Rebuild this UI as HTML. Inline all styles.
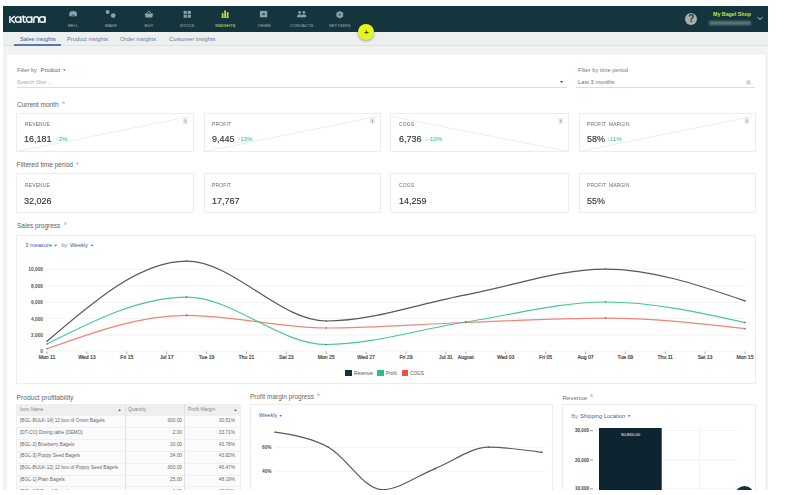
<!DOCTYPE html>
<html><head><meta charset="utf-8">
<style>
html,body{margin:0;padding:0;}
body{width:808px;height:495px;overflow:hidden;background:#fff;position:relative;font-family:"Liberation Sans",sans-serif;color:#444;}
.a{position:absolute;}
.t{position:absolute;white-space:nowrap;line-height:1;}
#app{left:3px;top:6px;width:765px;height:484px;background:#f3f2f2;overflow:hidden;}
#hdr{left:3px;top:6px;width:765px;height:26px;background:#14353d;}
#tabs{left:3px;top:32px;width:765px;height:13.2px;background:#eef0ef;border-bottom:1px solid #e2e0e0;}
#main{left:7px;top:55.2px;width:758px;height:435px;background:#fff;}
.lb2{position:absolute;width:40px;margin-left:-20px;top:23.5px;text-align:center;font-size:4.2px;color:#889ea3;-webkit-text-stroke:0.1px #889ea3;line-height:1;white-space:nowrap;letter-spacing:0.05px;}
.card{position:absolute;background:#fff;border:1px solid #ededed;box-sizing:border-box;border-radius:1px;box-shadow:0 0 1.5px rgba(0,0,0,0.04);}
.klabel{position:absolute;font-size:5.6px;color:#6a6a6a;letter-spacing:0.2px;word-spacing:1.5px;line-height:1;white-space:nowrap;transform:scaleX(0.88);transform-origin:0 0;}
.kval{position:absolute;font-size:9.7px;color:#363636;-webkit-text-stroke:0.15px #363636;line-height:1;white-space:nowrap;transform:scaleX(0.93);transform-origin:0 0;}
.kchg{position:absolute;font-size:6.1px;color:#2cba85;line-height:1;white-space:nowrap;}
.sec{position:absolute;font-size:6.5px;color:#606060;line-height:1;white-space:nowrap;}
.sec i{display:inline-block;width:3px;height:3px;background:#cfcfcf;border-radius:50%;vertical-align:top;position:relative;top:-0.7px;margin-left:3.3px;}
.info{position:absolute;width:5px;height:5px;border-radius:50%;background:#c8c8c8;}
.blue{color:#3a62b0;}
.tbl{position:absolute;font-size:4.8px;color:#666;line-height:1;white-space:nowrap;}
</style></head><body>
<div id="root" style="position:absolute;left:0;top:0;width:808px;height:495px;overflow:hidden;">
<div id="app" class="a"></div>
<div id="hdr" class="a"></div>
<svg class="a" style="left:0;top:0" width="808" height="40">
<g stroke="#eef3f4" stroke-width="1.45" fill="none" stroke-linecap="butt">
<path d="M9.9,16V22.9"/><path d="M14.8,16.1L10.5,19.5L14.9,22.9"/>
<circle cx="18.1" cy="19.5" r="2.65"/><path d="M20.8,16.2V22.9"/>
<path d="M23.4,15.6V21.2Q23.4,22.3 25.8,22.3"/><path d="M21.9,17H25.9"/>
<circle cx="29.1" cy="19.5" r="2.65"/><path d="M31.8,16.2V22.9"/>
<path d="M33.8,22.9V19.1A2.4,2.4 0 0 1 38.6,19.1V22.9"/>
<circle cx="42.2" cy="19.5" r="2.75"/><path d="M45,16.2V22.9"/>
</g>
<g fill="#8ba1a6">
<!-- sell: shop -->
<path d="M69.3,16.3V13.4Q69.3,10.9 73.1,10.9Q76.9,10.9 76.9,13.4V16.3Z"/>
<!-- make: gears -->
<circle cx="107.6" cy="12" r="2"/><circle cx="113.2" cy="15.6" r="2.4"/>
<!-- buy: basket -->
<path d="M144.6,13.6H153.2L152.2,17.6H145.6Z"/><path d="M146.5,13.6L148.9,10.9L151.3,13.6" stroke="#8ba1a6" stroke-width="0.9" fill="none"/>
<!-- stock: grid -->
<rect x="183.6" y="10.9" width="3.2" height="3"/><rect x="187.7" y="10.9" width="3.2" height="3"/>
<rect x="183.6" y="14.7" width="3.2" height="3"/><rect x="187.7" y="14.7" width="3.2" height="3"/>
<!-- items: box -->
<rect x="259.9" y="10.9" width="7.3" height="6.4"/>
<!-- contacts -->
<circle cx="299.6" cy="12.3" r="1.4"/><circle cx="303.8" cy="12.3" r="1.4"/>
<path d="M297,17.3Q297,14.3 299.6,14.3Q302.2,14.3 302.2,17.3Z"/><path d="M301.2,17.3Q301.2,14.3 303.8,14.3Q306.4,14.3 306.4,17.3Z"/>
<!-- settings gear -->
<path d="M339.8,10.9L343.2,12.8V16.6L339.8,18.5L336.4,16.6V12.8Z"/>
</g>
<rect x="262.3" y="13.1" width="2.6" height="2" fill="#3d5a62"/>
<circle cx="339.8" cy="14.7" r="1.1" fill="#3d5a62"/>
<rect x="71.6" y="14.6" width="3" height="1.7" fill="#4a666d"/>

<g fill="#c9e03a">
<rect x="221.8" y="13.2" width="1.7" height="4.1"/><rect x="224.3" y="10.4" width="1.7" height="6.9"/><rect x="226.8" y="12.2" width="1.7" height="5.1"/>
<rect x="221.5" y="17" width="7.3" height="0.8"/>
</g>
</svg>
<div class="lb2" style="left:73px;">SELL</div>
<div class="lb2" style="left:111px;">MAKE</div>
<div class="lb2" style="left:149px;">BUY</div>
<div class="lb2" style="left:187.3px;">STOCK</div>
<div class="lb2" style="left:225.3px;color:#c9e03a;">INSIGHTS</div>
<div class="lb2" style="left:264px;">ITEMS</div>
<div class="lb2" style="left:301.8px;">CONTACTS</div>
<div class="lb2" style="left:339.6px;">SETTINGS</div>

<!-- right header -->
<div class="a" style="left:684.8px;top:12.8px;width:12px;height:12px;border-radius:50%;background:#a7abac;"></div>
<div class="t" style="left:688.2px;top:14.3px;font-size:10px;font-weight:bold;color:#1e3a42;">?</div>
<div class="a" style="left:702px;top:10px;width:1px;height:17px;background:#1c3c45;"></div>
<div class="t" style="left:713px;top:12.2px;font-size:5.3px;font-weight:bold;color:#cde43a;">My Bagel Shop</div>
<div class="a" style="left:708.5px;top:21.1px;width:42.5px;height:3.6px;background:#5f777c;border-radius:1px;filter:blur(1px);"></div>
<svg class="a" style="left:755px;top:15px" width="10" height="8"><path d="M2.6,2.2L5,4.6L7.4,2.2" stroke="#d8e0e2" stroke-width="1" fill="none"/></svg>

<!-- tabs -->
<div id="tabs" class="a"></div>
<div class="t" style="left:20px;top:36.7px;font-size:5.8px;color:#3a5a8a;">Sales insights</div>
<div class="a" style="left:13.6px;top:44.3px;width:47px;height:1.3px;background:#5479b8;"></div>
<div class="t" style="left:67px;top:36.7px;font-size:5.8px;color:#6a7894;">Product insights</div>
<div class="t" style="left:120px;top:36.7px;font-size:5.8px;color:#6a7894;">Order insights</div>
<div class="t" style="left:169px;top:36.7px;font-size:5.8px;color:#6a7894;">Customer insights</div>

<!-- fab -->
<div class="a" style="left:358.4px;top:24.2px;width:16px;height:16px;border-radius:50%;background:#e4f71c;box-shadow:0 1px 3px rgba(0,0,0,0.35);"></div>
<div class="t" style="left:364px;top:28.6px;font-size:8px;font-weight:bold;color:#3a4a20;">+</div>

<div id="main" class="a"></div>

<!-- filters -->
<div class="t" style="left:17px;top:67.7px;font-size:5.6px;color:#777;">Filter by</div>
<div class="t" style="left:40.6px;top:67.7px;font-size:5.7px;color:#3a62b0;">Product</div>
<svg class="a" style="left:62px;top:68px" width="6" height="5"><path d="M0.9,1.4H3.9L2.4,3.1Z" fill="#3a62b0"/></svg>
<div class="t" style="left:17px;top:79.9px;font-size:5.5px;color:#aaa;">Search filter ...</div>
<div class="a" style="left:17px;top:86.7px;width:550px;height:0.8px;background:#ddd;"></div>
<svg class="a" style="left:559px;top:80px" width="6" height="5"><path d="M0.9,1H4.3L2.6,2.9Z" fill="#555"/></svg>
<div class="t" style="left:578px;top:68px;font-size:5.7px;color:#777;">Filter by time period</div>
<div class="t" style="left:578px;top:79.6px;font-size:5.8px;color:#6e6e6e;">Last 3 months</div>
<div class="a" style="left:746px;top:80px;width:5px;height:5px;border-radius:50%;background:#d6d6d6;"></div>
<div class="a" style="left:576px;top:87px;width:179px;height:1px;background:#ddd;"></div>

<!-- current month -->
<div class="sec" style="left:17px;top:101.6px;">Current month<i></i></div>
<div class="card" style="left:16.0px;top:112.6px;width:178.0px;height:39.8px;"></div>
<div class="card" style="left:203.5px;top:112.6px;width:177.7px;height:39.8px;"></div>
<div class="card" style="left:390.4px;top:112.6px;width:179.0px;height:39.8px;"></div>
<div class="card" style="left:578.6px;top:112.6px;width:177.0px;height:39.8px;"></div>
<svg class="a" style="left:0;top:0" width="808" height="495">
<path d="M17,151.5 L190,116.5" stroke="#ebebeb" stroke-width="0.9" fill="none"/>
<path d="M204.5,151.5 L377,116.5" stroke="#ebebeb" stroke-width="0.9" fill="none"/>
<path d="M391.4,116.5 L568.4,151.5" stroke="#ebebeb" stroke-width="0.9" fill="none"/>
<path d="M579.6,151.5 L752,116.5" stroke="#ebebeb" stroke-width="0.9" fill="none"/>
<rect x="183.0" y="118.2" width="4.6" height="5.6" rx="1" fill="#e6e6e6"/><line x1="185.3" x2="185.3" y1="119.6" y2="122.6" stroke="#9a9a9a" stroke-width="0.8"/>
<rect x="370.2" y="118.2" width="4.6" height="5.6" rx="1" fill="#e6e6e6"/><line x1="372.5" x2="372.5" y1="119.6" y2="122.6" stroke="#9a9a9a" stroke-width="0.8"/>
<rect x="558.4" y="118.2" width="4.6" height="5.6" rx="1" fill="#e6e6e6"/><line x1="560.7" x2="560.7" y1="119.6" y2="122.6" stroke="#9a9a9a" stroke-width="0.8"/>
<rect x="744.6" y="118.2" width="4.6" height="5.6" rx="1" fill="#e6e6e6"/><line x1="746.9" x2="746.9" y1="119.6" y2="122.6" stroke="#9a9a9a" stroke-width="0.8"/>
</svg>
<div class="klabel" style="left:24.6px;top:121.7px;">REVENUE</div>
<div class="kval" style="left:24.4px;top:134.4px;">16,181</div>
<div class="klabel" style="left:212.1px;top:121.7px;">PROFIT</div>
<div class="kval" style="left:211.9px;top:134.4px;">9,445</div>
<div class="klabel" style="left:399.0px;top:121.7px;">COGS</div>
<div class="kval" style="left:398.8px;top:134.4px;">6,736</div>
<div class="klabel" style="left:587.2px;top:121.7px;">PROFIT MARGIN</div>
<div class="kval" style="left:587.0px;top:134.4px;">58%</div>
<div class="kchg" style="left:55.6px;top:136.3px;">&#8593;2%</div>
<div class="kchg" style="left:237.2px;top:136.3px;">&#8593;13%</div>
<div class="kchg" style="left:424.8px;top:136.3px;">&#8595;-10%</div>
<div class="kchg" style="left:606.8px;top:136.3px;">&#8593;11%</div>

<!-- filtered time period -->
<div class="sec" style="left:16.6px;top:162.3px;font-size:6.6px;">Filtered time period<i></i></div>
<div class="card" style="left:16.0px;top:173.1px;width:178.0px;height:39.6px;"></div>
<div class="card" style="left:203.5px;top:173.1px;width:177.7px;height:39.6px;"></div>
<div class="card" style="left:390.4px;top:173.1px;width:179.0px;height:39.6px;"></div>
<div class="card" style="left:578.6px;top:173.1px;width:177.0px;height:39.6px;"></div>
<div class="klabel" style="left:24.6px;top:182.6px;">REVENUE</div>
<div class="kval" style="left:24.4px;top:195.6px;">32,026</div>
<div class="klabel" style="left:212.1px;top:182.6px;">PROFIT</div>
<div class="kval" style="left:211.9px;top:195.6px;">17,767</div>
<div class="klabel" style="left:399.0px;top:182.6px;">COGS</div>
<div class="kval" style="left:398.8px;top:195.6px;">14,259</div>
<div class="klabel" style="left:587.2px;top:182.6px;">PROFIT MARGIN</div>
<div class="kval" style="left:587.0px;top:195.6px;">55%</div>

<!-- sales progress -->
<div class="sec" style="left:17px;top:223px;">Sales progress<i></i></div>
<div class="card" style="left:16.3px;top:234.6px;width:739.6px;height:149.4px;"></div>
<svg class="a" style="left:0;top:0" width="808" height="495">
<line x1="47" x2="745" y1="269.1" y2="269.1" stroke="#efefef" stroke-width="0.8"/>
<line x1="47" x2="745" y1="285.7" y2="285.7" stroke="#efefef" stroke-width="0.8"/>
<line x1="47" x2="745" y1="302.3" y2="302.3" stroke="#efefef" stroke-width="0.8"/>
<line x1="47" x2="745" y1="318.6" y2="318.6" stroke="#efefef" stroke-width="0.8"/>
<line x1="47" x2="745" y1="334.9" y2="334.9" stroke="#efefef" stroke-width="0.8"/>
<line x1="47" x2="745" y1="351.2" y2="351.2" stroke="#f3f3f3" stroke-width="0.8"/>
<line x1="47.0" x2="47.0" y1="351.6" y2="354" stroke="#777" stroke-width="0.6"/>
<line x1="86.9" x2="86.9" y1="351.6" y2="354" stroke="#777" stroke-width="0.6"/>
<line x1="126.8" x2="126.8" y1="351.6" y2="354" stroke="#777" stroke-width="0.6"/>
<line x1="166.7" x2="166.7" y1="351.6" y2="354" stroke="#777" stroke-width="0.6"/>
<line x1="206.5" x2="206.5" y1="351.6" y2="354" stroke="#777" stroke-width="0.6"/>
<line x1="246.4" x2="246.4" y1="351.6" y2="354" stroke="#777" stroke-width="0.6"/>
<line x1="286.3" x2="286.3" y1="351.6" y2="354" stroke="#777" stroke-width="0.6"/>
<line x1="326.2" x2="326.2" y1="351.6" y2="354" stroke="#777" stroke-width="0.6"/>
<line x1="366.1" x2="366.1" y1="351.6" y2="354" stroke="#777" stroke-width="0.6"/>
<line x1="406.0" x2="406.0" y1="351.6" y2="354" stroke="#777" stroke-width="0.6"/>
<line x1="445.9" x2="445.9" y1="351.6" y2="354" stroke="#777" stroke-width="0.6"/>
<line x1="465.8" x2="465.8" y1="351.6" y2="354" stroke="#777" stroke-width="0.6"/>
<line x1="505.7" x2="505.7" y1="351.6" y2="354" stroke="#777" stroke-width="0.6"/>
<line x1="545.6" x2="545.6" y1="351.6" y2="354" stroke="#777" stroke-width="0.6"/>
<line x1="585.5" x2="585.5" y1="351.6" y2="354" stroke="#777" stroke-width="0.6"/>
<line x1="625.3" x2="625.3" y1="351.6" y2="354" stroke="#777" stroke-width="0.6"/>
<line x1="665.2" x2="665.2" y1="351.6" y2="354" stroke="#777" stroke-width="0.6"/>
<line x1="705.1" x2="705.1" y1="351.6" y2="354" stroke="#777" stroke-width="0.6"/>
<line x1="745.0" x2="745.0" y1="351.6" y2="354" stroke="#777" stroke-width="0.6"/>
<path d="M47.00,348.80C93.53,332.10 140.07,315.40 186.60,315.40C233.13,315.40 279.67,328.00 326.20,328.00C372.73,328.00 419.27,324.15 465.80,322.50C512.33,320.85 558.87,318.10 605.40,318.10C651.93,318.10 698.47,323.40 745.00,328.70" stroke="#f28474" stroke-width="1.2" fill="none"/>
<circle cx="47.0" cy="348.8" r="0.8" fill="#666"/>
<circle cx="186.6" cy="315.4" r="0.8" fill="#666"/>
<circle cx="326.2" cy="328.0" r="0.8" fill="#666"/>
<circle cx="465.8" cy="322.5" r="0.8" fill="#666"/>
<circle cx="605.4" cy="318.1" r="0.8" fill="#666"/>
<circle cx="745.0" cy="328.7" r="0.8" fill="#666"/>
<path d="M47.00,344.00C93.53,320.55 140.07,297.10 186.60,297.10C233.13,297.10 279.67,344.50 326.20,344.50C372.73,344.50 419.27,329.08 465.80,322.00C512.33,314.92 558.87,302.00 605.40,302.00C651.93,302.00 698.47,312.30 745.00,322.60" stroke="#46c79d" stroke-width="1.2" fill="none"/>
<circle cx="47.0" cy="344.0" r="0.8" fill="#666"/>
<circle cx="186.6" cy="297.1" r="0.8" fill="#666"/>
<circle cx="326.2" cy="344.5" r="0.8" fill="#666"/>
<circle cx="465.8" cy="322.0" r="0.8" fill="#666"/>
<circle cx="605.4" cy="302.0" r="0.8" fill="#666"/>
<circle cx="745.0" cy="322.6" r="0.8" fill="#666"/>
<path d="M47.00,341.30C93.53,301.25 140.07,261.20 186.60,261.20C233.13,261.20 279.67,321.00 326.20,321.00C372.73,321.00 419.27,303.45 465.80,294.80C512.33,286.15 558.87,269.10 605.40,269.10C651.93,269.10 698.47,285.00 745.00,300.90" stroke="#585858" stroke-width="1.2" fill="none"/>
<circle cx="47.0" cy="341.3" r="0.8" fill="#666"/>
<circle cx="186.6" cy="261.0" r="0.8" fill="#666"/>
<circle cx="326.2" cy="321" r="0.8" fill="#666"/>
<circle cx="465.8" cy="294.8" r="0.8" fill="#666"/>
<circle cx="605.4" cy="269.1" r="0.8" fill="#666"/>
<circle cx="745.0" cy="300.9" r="0.8" fill="#666"/>
</svg>
<div class="t" style="right:765px;top:268.0px;font-size:4.8px;color:#555;font-weight:bold;">10,000</div>
<div class="t" style="right:765px;top:284.6px;font-size:4.8px;color:#555;font-weight:bold;">8,000</div>
<div class="t" style="right:765px;top:301.2px;font-size:4.8px;color:#555;font-weight:bold;">6,000</div>
<div class="t" style="right:765px;top:317.5px;font-size:4.8px;color:#555;font-weight:bold;">4,000</div>
<div class="t" style="right:765px;top:333.8px;font-size:4.8px;color:#555;font-weight:bold;">2,000</div>
<div class="t" style="right:765px;top:350.1px;font-size:4.8px;color:#555;font-weight:bold;">0</div>
<div class="t" style="left:47.0px;width:30px;margin-left:-15px;text-align:center;top:355.4px;font-size:5.1px;color:#444;-webkit-text-stroke:0.2px #444;">Mon 11</div>
<div class="t" style="left:86.9px;width:30px;margin-left:-15px;text-align:center;top:355.4px;font-size:5.1px;color:#444;-webkit-text-stroke:0.2px #444;">Wed 13</div>
<div class="t" style="left:126.8px;width:30px;margin-left:-15px;text-align:center;top:355.4px;font-size:5.1px;color:#444;-webkit-text-stroke:0.2px #444;">Fri 15</div>
<div class="t" style="left:166.7px;width:30px;margin-left:-15px;text-align:center;top:355.4px;font-size:5.1px;color:#444;-webkit-text-stroke:0.2px #444;">Jul 17</div>
<div class="t" style="left:206.5px;width:30px;margin-left:-15px;text-align:center;top:355.4px;font-size:5.1px;color:#444;-webkit-text-stroke:0.2px #444;">Tue 19</div>
<div class="t" style="left:246.4px;width:30px;margin-left:-15px;text-align:center;top:355.4px;font-size:5.1px;color:#444;-webkit-text-stroke:0.2px #444;">Thu 21</div>
<div class="t" style="left:286.3px;width:30px;margin-left:-15px;text-align:center;top:355.4px;font-size:5.1px;color:#444;-webkit-text-stroke:0.2px #444;">Sat 23</div>
<div class="t" style="left:326.2px;width:30px;margin-left:-15px;text-align:center;top:355.4px;font-size:5.1px;color:#444;-webkit-text-stroke:0.2px #444;">Mon 25</div>
<div class="t" style="left:366.1px;width:30px;margin-left:-15px;text-align:center;top:355.4px;font-size:5.1px;color:#444;-webkit-text-stroke:0.2px #444;">Wed 27</div>
<div class="t" style="left:406.0px;width:30px;margin-left:-15px;text-align:center;top:355.4px;font-size:5.1px;color:#444;-webkit-text-stroke:0.2px #444;">Fri 29</div>
<div class="t" style="left:445.9px;width:30px;margin-left:-15px;text-align:center;top:355.4px;font-size:5.1px;color:#444;-webkit-text-stroke:0.2px #444;">Jul 31</div>
<div class="t" style="left:465.8px;width:30px;margin-left:-15px;text-align:center;top:355.4px;font-size:5.1px;color:#444;-webkit-text-stroke:0.2px #444;">August</div>
<div class="t" style="left:505.7px;width:30px;margin-left:-15px;text-align:center;top:355.4px;font-size:5.1px;color:#444;-webkit-text-stroke:0.2px #444;">Wed 03</div>
<div class="t" style="left:545.6px;width:30px;margin-left:-15px;text-align:center;top:355.4px;font-size:5.1px;color:#444;-webkit-text-stroke:0.2px #444;">Fri 05</div>
<div class="t" style="left:585.5px;width:30px;margin-left:-15px;text-align:center;top:355.4px;font-size:5.1px;color:#444;-webkit-text-stroke:0.2px #444;">Aug 07</div>
<div class="t" style="left:625.3px;width:30px;margin-left:-15px;text-align:center;top:355.4px;font-size:5.1px;color:#444;-webkit-text-stroke:0.2px #444;">Tue 09</div>
<div class="t" style="left:665.2px;width:30px;margin-left:-15px;text-align:center;top:355.4px;font-size:5.1px;color:#444;-webkit-text-stroke:0.2px #444;">Thu 11</div>
<div class="t" style="left:705.1px;width:30px;margin-left:-15px;text-align:center;top:355.4px;font-size:5.1px;color:#444;-webkit-text-stroke:0.2px #444;">Sat 13</div>
<div class="t" style="left:745.0px;width:30px;margin-left:-15px;text-align:center;top:355.4px;font-size:5.1px;color:#444;-webkit-text-stroke:0.2px #444;">Mon 15</div>
<div class="t" style="left:25.3px;top:243.4px;font-size:5.7px;color:#3a62b0;">3 measure</div>
<div class="t" style="left:61.4px;top:243.4px;font-size:5.7px;color:#888;">by</div>
<div class="t" style="left:69.9px;top:243.4px;font-size:5.6px;color:#3a62b0;">Weekly</div>
<svg class="a" style="left:0;top:0" width="808" height="495"><path d="M54.2,244.7H57.2L55.7,246.4Z" fill="#3a62b0"/><path d="M90.6,244.7H93.6L92.1,246.4Z" fill="#3a62b0"/></svg>
<div class="a" style="left:345px;top:370px;width:7px;height:6.4px;background:#15303a;"></div>
<div class="t" style="left:354px;top:372px;font-size:4.7px;color:#555;">Revenue</div>
<div class="a" style="left:377px;top:370px;width:7px;height:6.4px;background:#2dbf88;"></div>
<div class="t" style="left:386px;top:372px;font-size:4.7px;color:#555;">Profit</div>
<div class="a" style="left:401.5px;top:370px;width:6.5px;height:6.4px;background:#ef4f3c;"></div>
<div class="t" style="left:410px;top:372px;font-size:4.7px;color:#555;">COGS</div>

<!-- bottom -->
<div class="sec" style="left:16.6px;top:394.8px;font-size:6.7px;color:#666;">Product profitability</div>
<div class="a" style="left:16px;top:404px;width:225.4px;height:90px;background:#fbfbfb;border:1px solid #eeeeee;box-sizing:border-box;"></div>
<div class="a" style="left:16px;top:404px;width:225px;height:11.5px;background:#efefef;"></div>
<div class="a" style="left:125px;top:404px;width:1px;height:90px;background:#e3e3e3;"></div>
<div class="a" style="left:184px;top:404px;width:1px;height:90px;background:#e3e3e3;"></div>
<div class="tbl" style="left:20px;top:408.3px;color:#888;">Item Name</div>
<div class="tbl" style="left:117.5px;top:408.3px;color:#666;font-size:4px;">&#9650;</div>
<div class="tbl" style="left:128px;top:408.3px;color:#888;">Quantity</div>
<div class="tbl" style="left:188px;top:408.3px;color:#888;">Profit Margin</div>
<div class="tbl" style="left:233.5px;top:408.3px;color:#666;font-size:4px;">&#9650;</div>
<div class="a" style="left:17px;top:427.3px;width:223px;height:0.8px;background:#f0f0f0;"></div>
<div class="tbl" style="left:20px;top:419.0px;">[BGL-BULK-14] 12 box of Onion Bagels</div>
<div class="tbl" style="right:626px;top:419.0px;">300.00</div>
<div class="tbl" style="right:573px;top:419.0px;">30.51%</div>
<div class="a" style="left:17px;top:439.1px;width:223px;height:0.8px;background:#f0f0f0;"></div>
<div class="tbl" style="left:20px;top:430.8px;">[DT-CO] Dining table [DEMO]</div>
<div class="tbl" style="right:626px;top:430.8px;">2.00</div>
<div class="tbl" style="right:573px;top:430.8px;">33.71%</div>
<div class="a" style="left:17px;top:450.9px;width:223px;height:0.8px;background:#f0f0f0;"></div>
<div class="tbl" style="left:20px;top:442.6px;">[BGL-2] Blueberry Bagels</div>
<div class="tbl" style="right:626px;top:442.6px;">30.00</div>
<div class="tbl" style="right:573px;top:442.6px;">43.78%</div>
<div class="a" style="left:17px;top:462.7px;width:223px;height:0.8px;background:#f0f0f0;"></div>
<div class="tbl" style="left:20px;top:454.4px;">[BGL-3] Poppy Seed Bagels</div>
<div class="tbl" style="right:626px;top:454.4px;">34.00</div>
<div class="tbl" style="right:573px;top:454.4px;">43.82%</div>
<div class="a" style="left:17px;top:474.5px;width:223px;height:0.8px;background:#f0f0f0;"></div>
<div class="tbl" style="left:20px;top:466.2px;">[BGL-BULK-12] 12 box of Poppy Seed Bagels</div>
<div class="tbl" style="right:626px;top:466.2px;">300.00</div>
<div class="tbl" style="right:573px;top:466.2px;">46.47%</div>
<div class="a" style="left:17px;top:486.3px;width:223px;height:0.8px;background:#f0f0f0;"></div>
<div class="tbl" style="left:20px;top:478.0px;">[BGL-1] Plain Bagels</div>
<div class="tbl" style="right:626px;top:478.0px;">25.00</div>
<div class="tbl" style="right:573px;top:478.0px;">48.19%</div>
<div class="a" style="left:17px;top:498.1px;width:223px;height:0.8px;background:#f0f0f0;"></div>
<div class="tbl" style="left:20px;top:489.8px;">[BGL-10] Bagel Sampler</div>
<div class="tbl" style="right:626px;top:489.8px;">1.00</div>
<div class="tbl" style="right:573px;top:489.8px;">48.90%</div>
<div class="sec" style="left:250px;top:394px;color:#666;">Profit margin progress<i></i></div>
<div class="card" style="left:250px;top:404px;width:303px;height:100px;"></div>
<div class="t" style="left:259px;top:413px;font-size:5.6px;color:#3a62b0;">Weekly <span style="font-size:3.6px">&#9660;</span></div>
<svg class="a" style="left:0;top:0" width="808" height="495">
<line x1="275" x2="545" y1="447.3" y2="447.3" stroke="#efefef" stroke-width="0.8"/>
<line x1="275" x2="545" y1="471.1" y2="471.1" stroke="#efefef" stroke-width="0.8"/>
<path d="M275.00,432.20C292.80,434.92 310.60,437.63 328.40,447.20C346.20,456.77 364.00,489.60 381.80,489.60C399.60,489.60 417.40,475.67 435.20,468.60C453.00,461.53 470.80,447.20 488.60,447.20C506.40,447.20 524.20,449.80 542.00,452.40" stroke="#5a5a5a" stroke-width="1.2" fill="none"/>
<circle cx="275.0" cy="432.2" r="0.8" fill="#555"/>
<circle cx="328.4" cy="447.2" r="0.8" fill="#555"/>
<circle cx="381.8" cy="492.0" r="0.8" fill="#555"/>
<circle cx="435.2" cy="468.6" r="0.8" fill="#555"/>
<circle cx="488.6" cy="447.2" r="0.8" fill="#555"/>
<circle cx="542.0" cy="452.4" r="0.8" fill="#555"/>
</svg>
<div class="t" style="left:262px;top:445.7px;font-size:4.8px;color:#555;font-weight:bold;">60%</div>
<div class="t" style="left:262px;top:469.7px;font-size:4.8px;color:#555;font-weight:bold;">40%</div>
<div class="sec" style="left:562.4px;top:394.5px;font-size:6.2px;color:#707070;">Revenue<i></i></div>
<div class="card" style="left:562.4px;top:404px;width:193.6px;height:100px;"></div>
<div class="t" style="left:571.3px;top:413.8px;font-size:5.7px;color:#888;">By</div>
<div class="t" style="left:580px;top:413.8px;font-size:5.7px;color:#3a62b0;">Shipping Location</div>
<svg class="a" style="left:0;top:0" width="808" height="495"><path d="M627.5,415.2H630.5L629,416.9Z" fill="#3a62b0"/></svg>
<svg class="a" style="left:0;top:0" width="808" height="495">
<line x1="595" x2="738" y1="430.7" y2="430.7" stroke="#efefef" stroke-width="0.8"/>
<line x1="595" x2="738" y1="459.9" y2="459.9" stroke="#efefef" stroke-width="0.8"/>
<line x1="595" x2="738" y1="488.8" y2="488.8" stroke="#efefef" stroke-width="0.8"/>
<line x1="699.5" x2="699.5" y1="428" y2="495" stroke="#efefef" stroke-width="0.8"/>
<line x1="661.5" x2="661.5" y1="428" y2="495" stroke="#efefef" stroke-width="0.8"/>
<line x1="590" x2="593" y1="430.7" y2="430.7" stroke="#555" stroke-width="0.6"/>
<line x1="590" x2="593" y1="459.9" y2="459.9" stroke="#555" stroke-width="0.6"/>
<line x1="590" x2="593" y1="488.8" y2="488.8" stroke="#555" stroke-width="0.6"/>
<rect x="599" y="428" width="62.7" height="70" fill="#0f2431"/>
</svg>
<div class="t" style="right:219px;top:429.3px;font-size:4.6px;color:#444;font-weight:bold;">30,000</div>
<div class="t" style="right:219px;top:458.5px;font-size:4.6px;color:#444;font-weight:bold;">20,000</div>
<div class="t" style="right:219px;top:487.4px;font-size:4.6px;color:#444;font-weight:bold;">10,000</div>
<div class="t" style="left:599px;width:63px;text-align:center;top:433px;font-size:4.4px;color:#fff;">30,860.00</div>
<div class="a" style="left:734.5px;top:486.3px;width:19px;height:19px;border-radius:50%;background:#1a2f36;"></div>
<div class="a" style="left:0;top:490px;width:808px;height:5px;background:#fff;"></div>
<div class="a" style="left:768px;top:0;width:40px;height:495px;background:#fff;"></div>
</div>
</body></html>
